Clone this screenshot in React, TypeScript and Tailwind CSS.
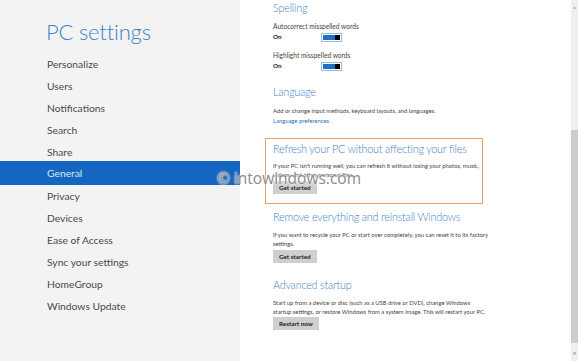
const navItems = [
  "Personalize",
  "Users",
  "Notifications",
  "Search",
  "Share",
  "General",
  "Privacy",
  "Devices",
  "Ease of Access",
  "Sync your settings",
  "HomeGroup",
  "Windows Update",
];

function Toggle() {
  return (
    <div className="flex h-[9px] w-[21px] items-stretch border border-[#9ab8dc] bg-white p-px">
      <div className="flex-1 bg-[#1d6fc4]" />
      <div className="w-[5px] bg-black" />
    </div>
  );
}

function Heading({ children }: { children: React.ReactNode }) {
  return (
    <h2 className="h-[16px] whitespace-nowrap text-[10.8px] font-light leading-[16px] tracking-[-0.2px] text-[#3f82c8]">
      {children}
    </h2>
  );
}

function GrayButton({ label }: { label: string }) {
  return (
    <button className="block h-[13px] bg-[#cfcfcf] px-[6px] text-[6.3px] font-bold leading-[13px] text-[#222]">
      {label}
    </button>
  );
}

export default function App() {
  return (
    <div
      className="relative flex h-[361px] w-[578px] overflow-hidden bg-white"
      style={{ fontFamily: 'Lato, "Open Sans", "Liberation Sans", sans-serif' }}
    >
      {/* left nav */}
      <aside className="w-[240px] shrink-0 bg-[#f3f3f3] pt-[17px]">
        <h1 className="pl-[46px] text-[22px] font-light leading-[30px] tracking-[-0.2px] text-[#3f82c8]">
          PC settings
        </h1>
        <ul className="mt-[6px]">
          {navItems.map((item) => (
            <li
              key={item}
              className={`pl-[47px] text-[10.3px] ${
                item === "General"
                  ? "-mt-[2px] h-[24px] bg-[#1466c0] leading-[25px] text-[#d6e6f7]"
                  : "h-[22px] leading-[22px] text-[#4a4a4a]"
              }`}
            >
              {item}
            </li>
          ))}
        </ul>
      </aside>

      {/* content */}
      <main className="flex-1 whitespace-nowrap pl-[33px] text-[5.85px] text-[#444]">
        <Heading>Spelling</Heading>
        <p className="mt-[5px] h-[10px] text-[6.6px] leading-[10px]">
          Autocorrect misspelled words
        </p>
        <div className="flex h-[12px] items-center">
          <span className="w-[48px] text-[6.3px] font-bold text-[#222]">On</span>
          <Toggle />
        </div>
        <p className="mt-[7px] h-[10px] text-[6.6px] leading-[10px]">
          Highlight misspelled words
        </p>
        <div className="flex h-[12px] items-center">
          <span className="w-[48px] text-[6.3px] font-bold text-[#222]">On</span>
          <Toggle />
        </div>

        <div className="mt-[12px]">
          <Heading>Language</Heading>
          <p className="mt-[6px] leading-[10px]">
            Add or change input methods, keyboard layouts, and languages.
          </p>
          <a className="block leading-[10px] text-[#2e6fb7]">Language preferences</a>
        </div>

        <div className="-ml-[8px] mt-[12px] w-[218px] border border-[#e8a064] pb-[9px] pl-[7px] pt-[2px]">
          <Heading>Refresh your PC without affecting your files</Heading>
          <p className="mt-[4px] leading-[9px]">
            If your PC isn't running well, you can refresh it without losing your photos, music,
            <br />
            videos, and other personal files.
          </p>
          <div className="mt-[2px]">
            <GrayButton label="Get started" />
          </div>
        </div>

        <div className="mt-[5px]">
          <Heading>Remove everything and reinstall Windows</Heading>
          <p className="mt-[5px] leading-[9px]">
            If you want to recycle your PC or start over completely, you can reset it to its factory
            <br />
            settings.
          </p>
          <div className="mt-[2px]">
            <GrayButton label="Get started" />
          </div>
        </div>

        <div className="mt-[14px]">
          <Heading>Advanced startup</Heading>
          <p className="mt-[5px] leading-[9px]">
            Start up from a device or disc (such as a USB drive or DVD), change Windows
            <br />
            startup settings, or restore Windows from a system image. This will restart your PC.
          </p>
          <div className="mt-[1px]">
            <GrayButton label="Restart now" />
          </div>
        </div>
      </main>

      {/* scrollbar */}
      <aside className="flex w-[7px] shrink-0 flex-col bg-[#f0f0f0]">
        <div className="flex h-[16px] items-center justify-center text-[6px] text-[#777]">
          ^
        </div>
        <div className="mt-[114px] h-[213px] bg-[#cdcdcd]" />
        <div className="flex flex-1 items-center justify-center text-[6px] text-[#777]">
          v
        </div>
      </aside>

      {/* watermark */}
      <div
        className="pointer-events-none absolute left-[217px] top-[167px] text-[15.5px] leading-[22px] text-[#8a8a8a] [text-shadow:0_0_2px_#fff,0_0_2px_#fff]"
        style={{ fontFamily: '"Open Sans", sans-serif' }}
      >
        © intowindows.com
      </div>
    </div>
  );
}
